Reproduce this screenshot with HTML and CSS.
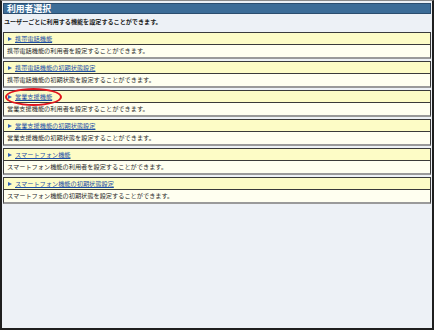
FILE: index.html
```html
<!DOCTYPE html>
<html lang="ja">
<head>
  <meta charset="UTF-8">
  <title>利用者選択</title>
  <link rel="stylesheet" href="styles.css">
</head>
<body>
  <div class="panel">
    <div class="panel-title">利用者選択</div>
    <p class="lead">ユーザーごとに利用する機能を設定することができます。</p>
    <ul class="func-list">
      <li class="func">
        <div class="func-head"><span class="arrow"></span><a href="#">携帯電話機能</a></div>
        <div class="func-desc">携帯電話機能の利用者を設定することができます。</div>
      </li>
      <li class="func">
        <div class="func-head"><span class="arrow"></span><a href="#">携帯電話機能の初期状態設定</a></div>
        <div class="func-desc">携帯電話機能の初期状態を設定することができます。</div>
      </li>
      <li class="func">
        <div class="func-head"><span class="arrow"></span><a href="#">営業支援機能</a><span class="mark"></span></div>
        <div class="func-desc">営業支援機能の利用者を設定することができます。</div>
      </li>
      <li class="func">
        <div class="func-head"><span class="arrow"></span><a href="#">営業支援機能の初期状態設定</a></div>
        <div class="func-desc">営業支援機能の初期状態を設定することができます。</div>
      </li>
      <li class="func">
        <div class="func-head"><span class="arrow"></span><a href="#">スマートフォン機能</a></div>
        <div class="func-desc">スマートフォン機能の利用者を設定することができます。</div>
      </li>
      <li class="func">
        <div class="func-head"><span class="arrow"></span><a href="#">スマートフォン機能の初期状態設定</a></div>
        <div class="func-desc">スマートフォン機能の初期状態を設定することができます。</div>
      </li>
    </ul>
  </div>
</body>
</html>
```

FILE: styles.css
```css
body {
  margin: 0;
  background-color: #fff;
  font-family: "Noto Sans CJK JP", "Noto Sans", sans-serif;
  color: #2a2a2a;
}
.panel {
  box-sizing: border-box;
  width: 434px;
  height: 330px;
  border: 2px solid #1e1e1e;
  border-top: 1px solid #8a8a8a;
  padding: 2px 1px 0 1px;
  background-color: #edf1f6;
}
.panel-title {
  box-sizing: border-box;
  height: 11px;
  line-height: 9px;
  padding-left: 3px;
  background-color: #3c6c97;
  border: 1px solid #2b4d6e;
  color: #fff;
  font-size: 8.8px;
  font-weight: bold;
}
.lead {
  margin: 0;
  height: 18px;
  line-height: 16px;
  padding-left: 1px;
  font-size: 6.1px;
  font-weight: bold;
  color: #1a1a1a;
}
.func-list {
  list-style: none;
  margin: 0;
  padding: 0;
  display: flex;
  flex-direction: column;
  gap: 2px;
}
.func {
  border: 1px solid #3a3a3a;
  border-bottom: 2px solid #9a9a9a;
}
.func-head {
  position: relative;
  display: flex;
  align-items: center;
  height: 11px;
  padding-left: 4px;
  background-color: #fdfcc6;
  border-bottom: 1px solid #3a3a3a;
  font-size: 6.2px;
}
.func-head a {
  color: #1d4fa6;
}
.arrow {
  width: 0;
  height: 0;
  border-left: 4px solid #2f62b8;
  border-top: 2.5px solid transparent;
  border-bottom: 2.5px solid transparent;
  margin-right: 3px;
}
.func-desc {
  height: 12px;
  line-height: 12px;
  padding-left: 3px;
  background-color: #fffff0;
  font-size: 6.2px;
}
.mark {
  position: absolute;
  left: 1px;
  top: -3px;
  width: 53px;
  height: 14px;
  border: 2px solid #e0141c;
  border-radius: 50%;
}
```
